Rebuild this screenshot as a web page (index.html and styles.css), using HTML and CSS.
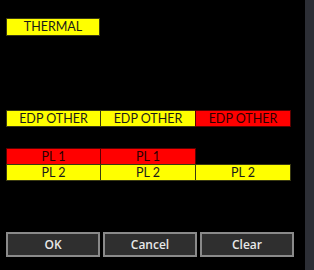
FILE: index.html
```html
<!DOCTYPE html>
<html lang="en">

<head>
    <meta charset="UTF-8">
    <meta name="viewport" content="width=device-width, initial-scale=1.0">
    <title>Alerts</title>
    <link rel="stylesheet" href="styles.css">
</head>

<body>
    <div class="window">
        <div class="panel">
            <div class="row row-thermal">
                <div class="cell yellow">THERMAL</div>
            </div>

            <div class="row row-edp">
                <div class="cell yellow">EDP OTHER</div>
                <div class="cell yellow">EDP OTHER</div>
                <div class="cell red">EDP OTHER</div>
            </div>

            <div class="row row-pl1">
                <div class="cell red">PL 1</div>
                <div class="cell red">PL 1</div>
            </div>
            <div class="row row-pl2">
                <div class="cell yellow">PL 2</div>
                <div class="cell yellow">PL 2</div>
                <div class="cell yellow">PL 2</div>
            </div>

            <div class="buttons">
                <button type="button">OK</button>
                <button type="button">Cancel</button>
                <button type="button">Clear</button>
            </div>
        </div>
        <div class="scrollbar"></div>
    </div>
</body>

</html>
```

FILE: styles.css
```css
body {
    margin: 0;
    background-color: #000;
    font-family: Lato, "Open Sans", sans-serif;
}

.window {
    display: flex;
    height: 270px;
}

.panel {
    flex: 1;
    padding-left: 6px;
}

.scrollbar {
    width: 9px;
    background-color: #2c2e35;
}

/* cell rows */
.row {
    display: flex;
}

.row-thermal {
    margin-top: 18px;
}

.row-edp {
    margin-top: 74px;
}

.row-pl1 {
    margin-top: 21px;
}

.row-pl2 {
    margin-top: -1px;
}

.cell {
    box-sizing: border-box;
    width: 95px;
    height: 18px;
    border: 1px solid #3a3a10;
    font-size: 12.5px;
    line-height: 16px;
    text-align: center;
    color: #1a1a1a;
}

.row-edp .cell,
.row-pl1 .cell,
.row-pl2 .cell {
    height: 17px;
    line-height: 15px;
}

.cell + .cell {
    margin-left: -1px;
    width: 96px;
}

.row-thermal .cell {
    width: 94px;
}

.yellow {
    background-color: #ffff00;
}

.red {
    background-color: #ff0000;
    border-color: #5a0000;
    color: #2a0000;
}

/* bottom buttons */
.buttons {
    display: flex;
    gap: 3px;
    margin-top: 51px;
}

button {
    box-sizing: border-box;
    width: 94px;
    height: 25px;
    background-color: #2f2f2f;
    border: 2px solid #8a8a8a;
    color: #e8e8e8;
    font-family: "Open Sans", sans-serif;
    font-size: 12px;
    font-weight: 600;
    padding: 0;
}
```
